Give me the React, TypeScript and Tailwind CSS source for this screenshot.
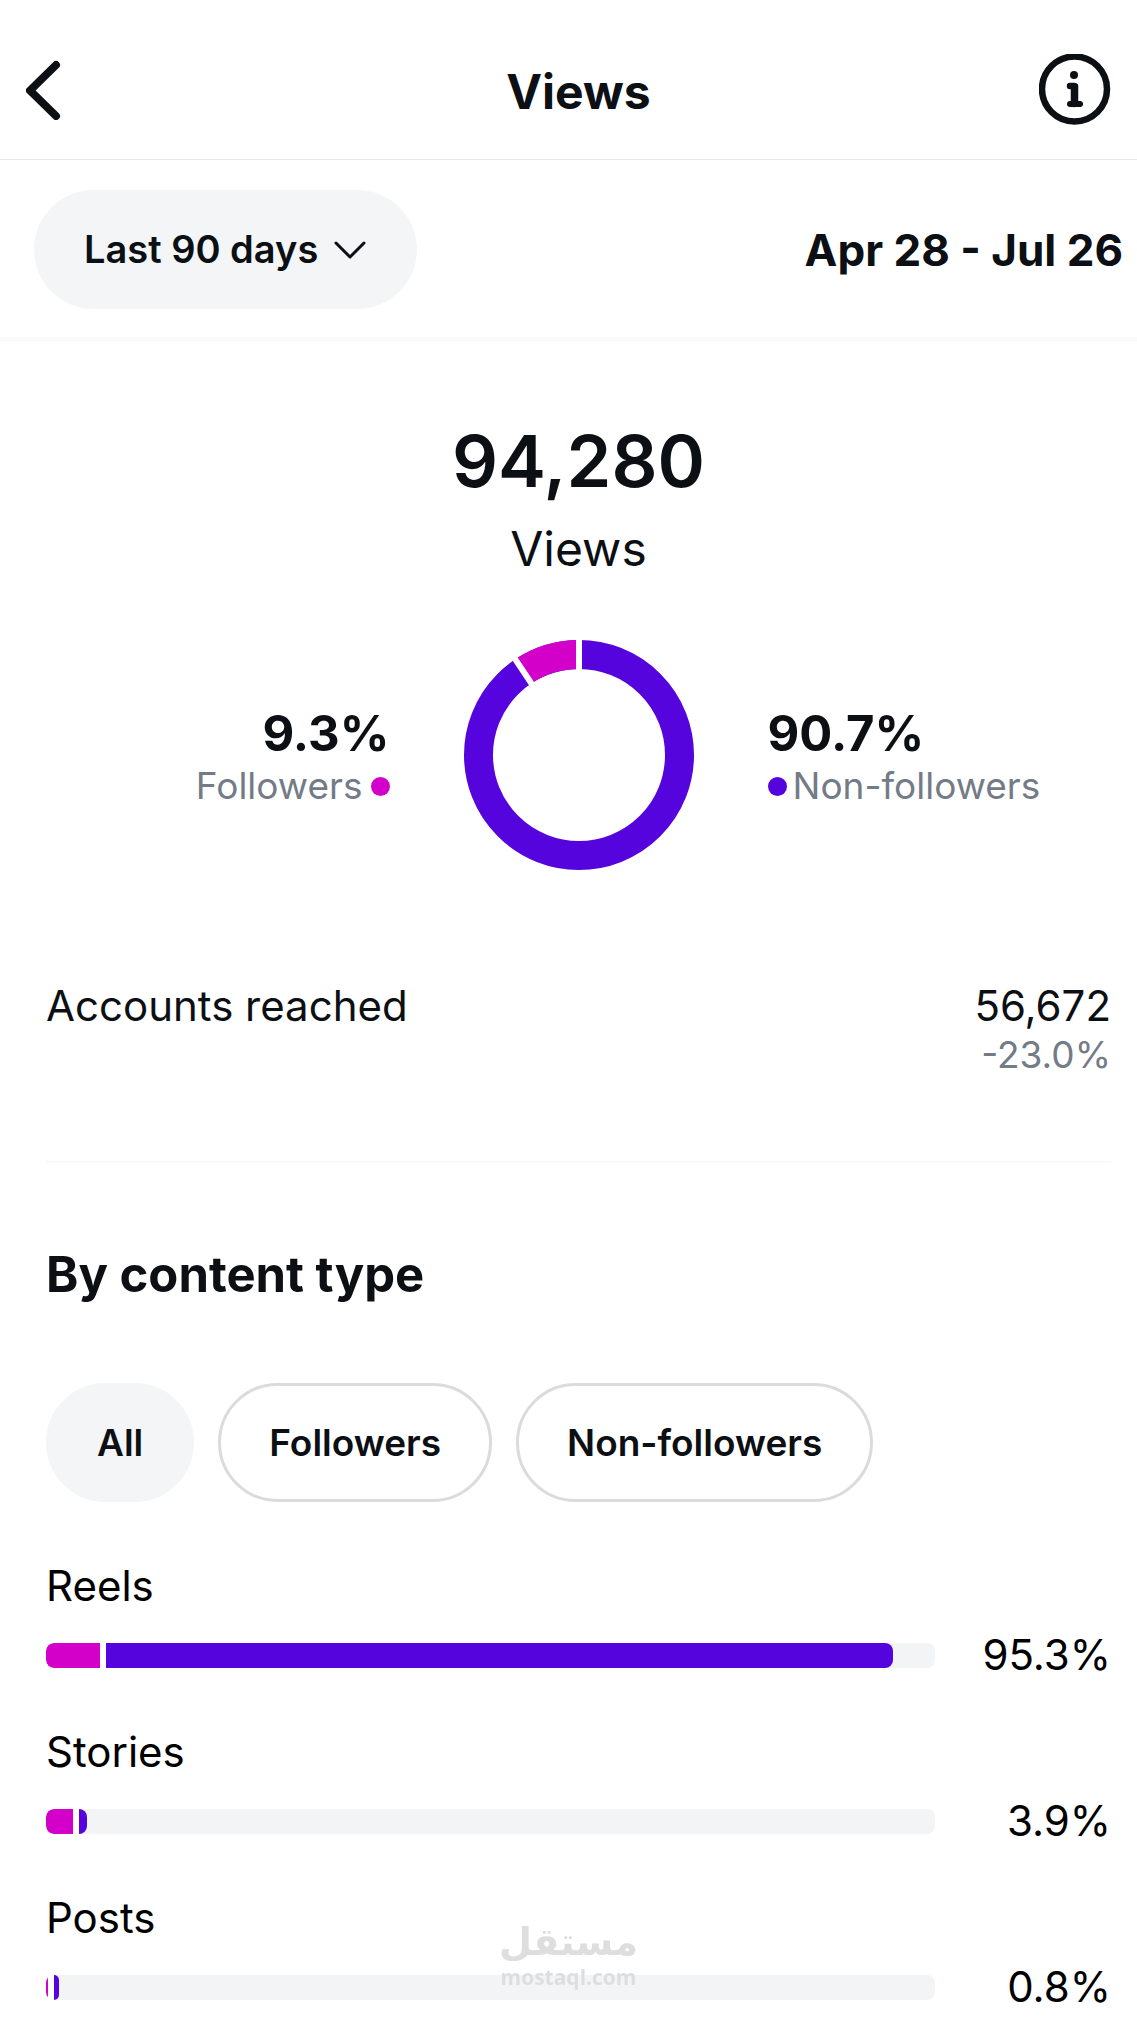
import { useState } from "react";

const contentTypes = [
  { name: "Reels", total: "95.3%", followers: 6.1, nonFollowers: 88.5 },
  { name: "Stories", total: "3.9%", followers: 3, nonFollowers: 0.9 },
  { name: "Posts", total: "0.8%", followers: 0.2, nonFollowers: 0.6 },
];

const audiences = ["All", "Followers", "Non-followers"];

function Header() {
  return (
    <header className="flex h-40 items-center border-b border-[#e8e8e8] pt-5 pr-[26px] pl-[46px]">
      <div className="flex flex-1">
        <button type="button" aria-label="Back" className="-ml-5">
          <svg width="36" height="60" viewBox="0 0 36 60" fill="none" stroke="currentColor" strokeWidth="8" strokeLinecap="round" strokeLinejoin="round">
            <path d="M30 5 4 30.5 30 56" />
          </svg>
        </button>
      </div>
      <h1 className="pt-1 text-[48px] leading-[60px] font-bold">Views</h1>
      <div className="flex flex-1 justify-end">
        <button type="button" aria-label="Info">
          <svg width="72" height="72" viewBox="0 0 72 72" fill="none" stroke="currentColor" strokeLinecap="round" strokeLinejoin="round">
            <circle cx="35.5" cy="35" r="32.5" strokeWidth="6.5" />
            <circle cx="35" cy="21" r="4" fill="currentColor" stroke="none" />
            <path d="M31 32h4v18" strokeWidth="6.5" />
            <path d="M36.5 32v18" strokeWidth="5.5" />
            <path d="M31 50h10" strokeWidth="6" />
          </svg>
        </button>
      </div>
    </header>
  );
}

function DateFilter() {
  return (
    <div className="flex items-center justify-between border-b-4 border-[#fafafa] pt-[30px] pr-[14px] pb-7 pl-[34px]">
      <div className="relative">
        <select
          aria-label="Date range"
          className="h-[119px] appearance-none rounded-full bg-[#f3f5f7] pr-[98px] pl-[50px] text-[38px] font-semibold"
        >
          <option>Last 90 days</option>
        </select>
        <svg className="pointer-events-none absolute top-1/2 right-[50px] -translate-y-1/2" width="34" height="20" viewBox="0 0 34 20" fill="none" stroke="currentColor" strokeWidth="3" strokeLinecap="round" strokeLinejoin="round">
          <path d="M3 3 17 17 31 3" />
        </svg>
      </div>
      <p className="text-[44px] leading-[48px] font-bold">Apr 28 - Jul 26</p>
    </div>
  );
}

function Donut() {
  return (
    <svg width="230" height="230" viewBox="0 0 230 230" fill="none" role="img" aria-label="9.3% followers, 90.7% non-followers">
      <circle cx="115" cy="115" r="100.5" stroke="#5604de" strokeWidth="29" />
      {/* followers slice, drawn counter-clockwise from 12 o'clock */}
      <path d="M115 14.5A100.5 100.5 0 0 0 59.3 31.35" stroke="#d200c8" strokeWidth="29" />
      <path d="M115 -2V36" stroke="white" strokeWidth="6" />
      <path d="M50 17.3 69 45.9" stroke="white" strokeWidth="6" />
    </svg>
  );
}

function Overview() {
  return (
    <section>
      <div className="text-center">
        <p className="text-[72px] leading-[72px] font-semibold">94,280</p>
        <p className="mt-[22px] text-[48px] leading-[60px]">Views</p>
      </div>
      <div className="mt-[61px] grid grid-cols-[1fr_auto_1fr] items-center gap-[74px]">
        <div className="flex flex-col items-end pt-2">
          <p className="text-[49px] leading-[54px] font-bold">9.3%</p>
          <p className="flex items-center gap-2 text-[37px] leading-[50px] text-[#737b87]">
            Followers
            <span className="size-[19px] rounded-full bg-[#d200c8]" />
          </p>
        </div>
        <Donut />
        <div className="flex flex-col items-start pt-2">
          <p className="text-[49px] leading-[54px] font-bold">90.7%</p>
          <p className="flex items-center gap-1.5 text-[37px] leading-[50px] whitespace-nowrap text-[#737b87]">
            <span className="size-[19px] rounded-full bg-[#5604de]" />
            Non-followers
          </p>
        </div>
      </div>
      <div className="mt-[111px] flex justify-between border-b-2 border-[#f8f9fa] pb-[82px] text-[42px] leading-[50px]">
        <p>Accounts reached</p>
        <div className="text-right">
          <p>56,672</p>
          <p className="text-[37px] leading-[48px] text-[#737b87]">-23.0%</p>
        </div>
      </div>
    </section>
  );
}

function Bar({ followers, nonFollowers }: { followers: number; nonFollowers: number }) {
  return (
    <div className="flex h-[25px] flex-1 overflow-hidden rounded-lg bg-[#f3f4f6]">
      <div className="rounded-l-lg bg-[#d200c8]" style={{ width: `${followers}%` }} />
      <div className="w-[6px] bg-white" />
      <div className="rounded-r-lg bg-[#5604de]" style={{ width: `${nonFollowers}%` }} />
    </div>
  );
}

function ContentTypes() {
  const [audience, setAudience] = useState("All");

  return (
    <section className="mt-[82px]">
      <h2 className="text-[49px] leading-[60px] font-bold">By content type</h2>
      <div className="mt-[78px] flex gap-6">
        {audiences.map((item) => (
          <button
            key={item}
            type="button"
            aria-pressed={item === audience}
            onClick={() => setAudience(item)}
            className={`h-[119px] rounded-full border-3 px-12 text-[37px] font-semibold ${
              item === audience ? "border-[#f3f5f7] bg-[#f3f5f7]" : "border-[#dbdbdb]"
            }`}
          >
            {item}
          </button>
        ))}
      </div>
      <ul className="mt-[60px] flex flex-col gap-[49px] text-[42px] leading-[48px] text-black">
        {contentTypes.map((type) => (
          <li key={type.name}>
            <p>{type.name}</p>
            <div className="mt-[21px] flex items-center">
              <Bar followers={type.followers} nonFollowers={type.nonFollowers} />
              <p className="w-44 text-right">{type.total}</p>
            </div>
          </li>
        ))}
      </ul>
    </section>
  );
}

function Watermark() {
  return (
    <div className="pointer-events-none fixed bottom-[38px] left-1/2 flex -translate-x-1/2 flex-col items-center font-bold text-[#dedede]">
      <p dir="rtl" lang="ar" className="font-['DejaVu_Sans',sans-serif] text-[38px] leading-[42px]">مستقل</p>
      <p className="font-['Open_Sans',sans-serif] text-[21px] leading-7">mostaql.com</p>
    </div>
  );
}

export default function App() {
  return (
    <div className="min-h-screen bg-white font-['Inter',sans-serif] text-[#0c1014]">
      <Header />
      <DateFilter />
      <main className="pt-[84px] pr-[26px] pb-4 pl-[46px]">
        <Overview />
        <ContentTypes />
      </main>
      <Watermark />
    </div>
  );
}
